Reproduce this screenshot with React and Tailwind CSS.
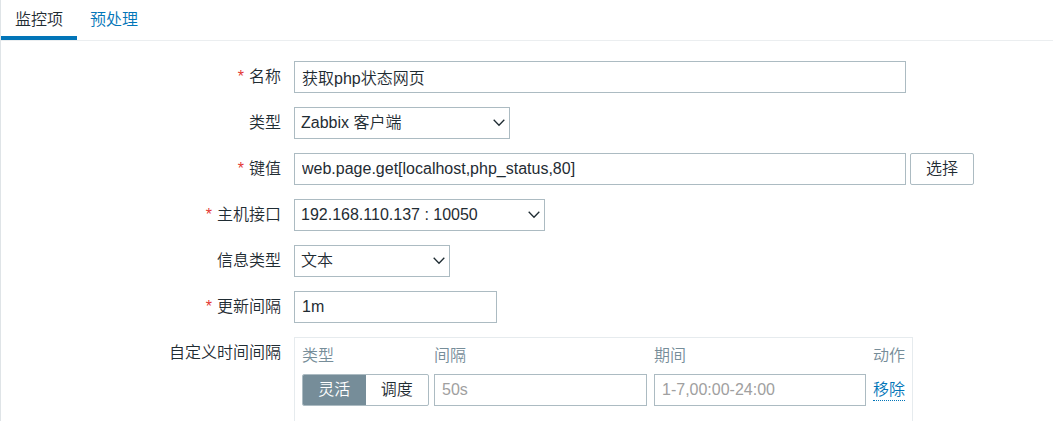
import { useState } from "react";

const control =
  "h-8 border border-[#acbbc2] bg-white text-base text-[#1f2c33] outline-none focus:border-[#0275b8] placeholder:text-[#a0a0a0]";

function Row({ label, htmlFor, required, children }) {
  return (
    <div className="grid grid-cols-[280px_minmax(0,1fr)] gap-[13px]">
      <label htmlFor={htmlFor} className="flex h-8 items-center justify-end gap-[5px]">
        {required && <span className="text-[#e33734]">*</span>}
        <span>{label}</span>
      </label>
      <div className="flex gap-1">{children}</div>
    </div>
  );
}

function Select({ id, width, options }) {
  return (
    <div className={`relative ${width}`}>
      <select id={id} className={`${control} w-full appearance-none pr-7 pl-1.5`}>
        {options.map((option) => (
          <option key={option}>{option}</option>
        ))}
      </select>
      <svg
        className="pointer-events-none absolute top-3 right-[5px] h-2 w-3"
        viewBox="0 0 12 8"
        fill="none"
        stroke="#1f2c33"
        strokeWidth="1.3"
        aria-hidden="true"
      >
        <path d="M0.7 0.8 L6 6.2 L11.3 0.8" />
      </svg>
    </div>
  );
}

export default function App() {
  const [mode, setMode] = useState("flexible");
  const segment = "flex h-full flex-1 cursor-pointer items-center justify-center";

  return (
    <main className="flex min-h-screen flex-col border-l border-[#dfe4e7] bg-white font-['Liberation_Sans','Noto_Sans_CJK_SC',sans-serif] text-base leading-6 font-[350] text-[#1f2c33]">
      <nav className="flex border-b border-[#ebeef0]">
        <a href="#item" className="h-10 border-b-4 border-[#0275b8] px-3.5 pt-2">
          监控项
        </a>
        <a href="#preprocessing" className="h-10 px-[13px] pt-2 text-[#0275b8]">
          预处理
        </a>
      </nav>

      <form className="flex flex-1 flex-col gap-3.5 pt-5">
        <Row label="名称" htmlFor="name" required>
          <input id="name" defaultValue="获取php状态网页" className={`${control} w-full max-w-[612px] px-[7px]`} />
        </Row>
        <Row label="类型" htmlFor="type">
          <Select id="type" width="w-[216px]" options={["Zabbix 客户端"]} />
        </Row>
        <Row label="键值" htmlFor="key" required>
          <input
            id="key"
            defaultValue="web.page.get[localhost,php_status,80]"
            className={`${control} w-full max-w-[612px] px-[7px]`}
          />
          <button type="button" className="h-8 w-16 shrink-0 rounded-xs border border-[#acbbc2] bg-white">
            选择
          </button>
        </Row>
        <Row label="主机接口" htmlFor="interface" required>
          <Select id="interface" width="w-[251px]" options={["192.168.110.137 : 10050"]} />
        </Row>
        <Row label="信息类型" htmlFor="value-type">
          <Select id="value-type" width="w-[156px]" options={["文本"]} />
        </Row>
        <Row label="更新间隔" htmlFor="delay" required>
          <input id="delay" defaultValue="1m" className={`${control} w-[203px] px-[7px]`} />
        </Row>

        <div className="grid flex-1 grid-cols-[280px_minmax(0,1fr)] gap-[13px]">
          <div id="intervals" className="flex h-8 items-center justify-end">
            自定义时间间隔
          </div>
          <div className="w-fit border border-b-0 border-[#e6ebee] px-[7px] pt-1.5">
            <table aria-labelledby="intervals">
              <thead>
                <tr className="text-left text-[#768d99]">
                  <th className="pb-1.5 font-[350]">类型</th>
                  <th className="pb-1.5 font-[350]">间隔</th>
                  <th className="pb-1.5 font-[350]">期间</th>
                  <th className="pb-1.5 font-[350]">动作</th>
                </tr>
              </thead>
              <tbody>
                <tr>
                  <td className="pr-[5px]">
                    <div className="flex h-8 w-[127px] overflow-hidden rounded-xs border border-[#acbbc2]">
                      <label className={`${segment} ${mode === "flexible" ? "bg-[#768d99] text-white" : ""}`}>
                        <input
                          type="radio"
                          name="mode"
                          className="sr-only"
                          checked={mode === "flexible"}
                          onChange={() => setMode("flexible")}
                        />
                        灵活
                      </label>
                      <label className={`${segment} ${mode === "scheduling" ? "bg-[#768d99] text-white" : ""}`}>
                        <input
                          type="radio"
                          name="mode"
                          className="sr-only"
                          checked={mode === "scheduling"}
                          onChange={() => setMode("scheduling")}
                        />
                        调度
                      </label>
                    </div>
                  </td>
                  <td className="pr-[7px]">
                    <input aria-label="间隔" placeholder="50s" className={`${control} block w-[213px] px-[7px]`} />
                  </td>
                  <td className="pr-[7px]">
                    <input
                      aria-label="期间"
                      placeholder="1-7,00:00-24:00"
                      className={`${control} block w-[212px] px-[7px]`}
                    />
                  </td>
                  <td>
                    <button type="button" className="block border-b border-dotted border-[#0275b8] leading-5 text-[#0275b8]">
                      移除
                    </button>
                  </td>
                </tr>
              </tbody>
            </table>
          </div>
        </div>
      </form>
    </main>
  );
}
